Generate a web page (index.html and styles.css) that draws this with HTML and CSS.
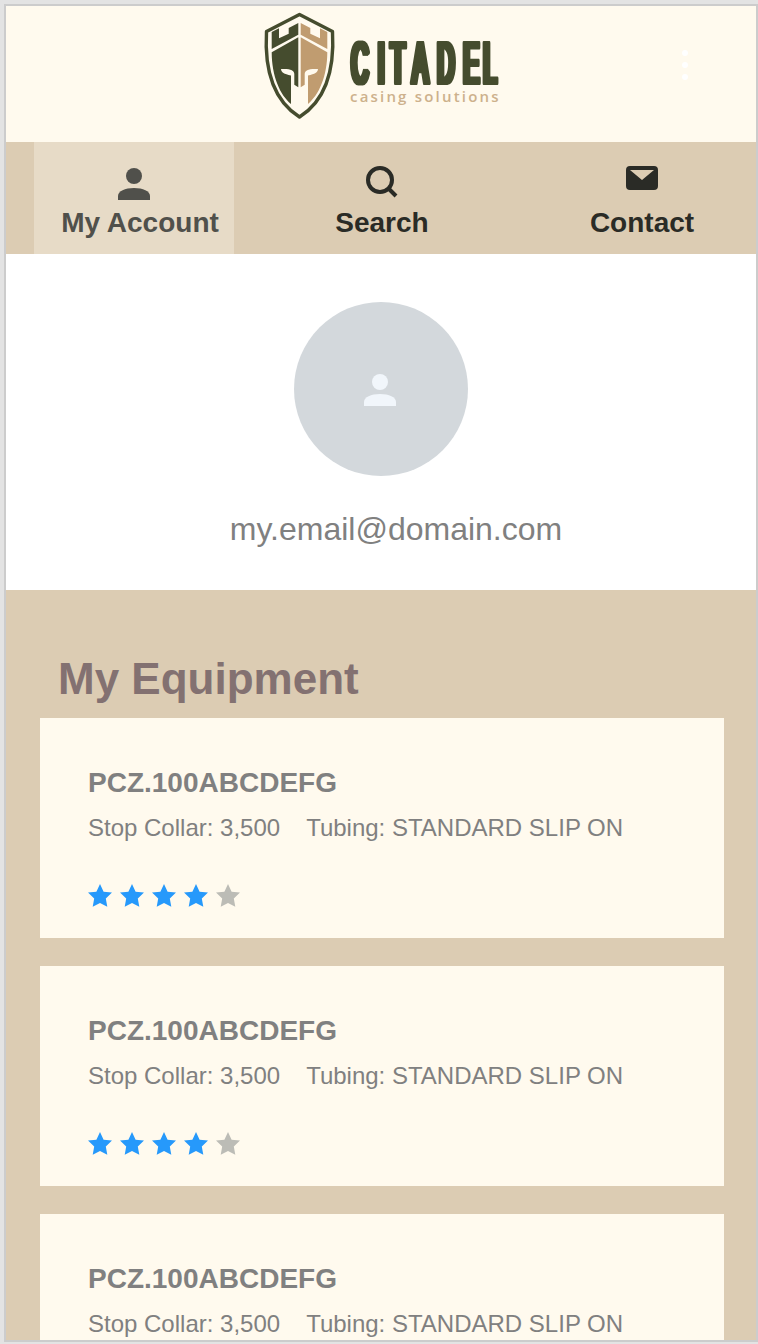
FILE: index.html
```html
<!DOCTYPE html>
<html lang="en">
<head>
<meta charset="utf-8">
<title>Citadel – My Account</title>
<link rel="stylesheet" href="styles.css">
</head>
<body>
<svg class="defs" width="0" height="0">
  <symbol id="person" viewBox="0 0 32 32"><circle cx="16" cy="8" r="8"/><path d="M0 32v-4c0-5 7-8 16-8s16 3 16 8v4z"/></symbol>
  <symbol id="star" viewBox="0 0 24 24"><path d="M12 0l3.600 7.700 8.400.9-6.200 5.800 1.500 8.300L12 18.900l-7.300 3.800 1.500-8.300L0 8.600l8.400-.9z"/></symbol>
  <symbol id="half" viewBox="260 11 240 110">
    <path d="M271.700 32l7.300-3.700v10l9.700-4.500V28l9.600-5v11.700L271.700 49z"/>
    <path d="M271.700 52.300l26.600-15v50l-4-2.600V74c-.3-4-4-5.500-13.300-5 .3 3.500 3 5 10 6.500V104c-11-9-19.300-28-19.300-51.700z"/>
  </symbol>
</svg>
<div class="screen">
  <header class="header">
    <svg class="logo" width="240" height="110" viewBox="260 11 240 110" role="img" aria-label="Citadel casing solutions">
      <filter id="widen" x="-10%" y="-10%" width="120%" height="120%" color-interpolation-filters="sRGB"><feMorphology operator="dilate" radius="2 0"/></filter>
      <path d="M299.500 14.500L332.500 31.500C334.500 66 328 99 299.500 117C271 99 264.500 66 266.500 31.500Z" fill="none" stroke="#454c2e" stroke-width="3.400" stroke-linejoin="round"/>
      <use class="green" href="#half" x="260" y="11" width="240" height="110"/>
      <g transform="translate(599 0) scale(-1 1)"><use class="tan" href="#half" x="260" y="11" width="240" height="110"/></g>
      <g filter="url(#widen)"><text class="wordmark" transform="translate(351.600 83) scale(.4 1)" x="0 66 98 152 215 279.500 329.500" y="0">CITADEL</text></g>
      <text class="tagline" x="350" y="102" textLength="148.500">casing solutions</text>
    </svg>
    <svg class="more" width="6" height="30" viewBox="0 0 6 30"><circle cx="3" cy="3" r="3"/><circle cx="3" cy="15" r="3"/><circle cx="3" cy="27" r="3"/></svg>
  </header>
  <nav class="tabs">
    <a class="tab active"><svg class="tab-icon" width="32" height="34"><use href="#person" y="2" width="32" height="32"/></svg><span>My Account</span></a>
    <a class="tab search"><svg class="tab-icon" width="32" height="34" viewBox="0 0 32 34"><g fill="none" stroke="#2a2b26" stroke-width="4"><circle cx="14" cy="14" r="12"/><path d="M22.500 22.500l7.500 7.500"/></g></svg><span>Search</span></a>
    <a class="tab contact"><svg class="tab-icon" width="32" height="34" viewBox="0 0 32 34"><path fill-rule="evenodd" d="M4 0h24a4 4 0 0 1 4 4v16a4 4 0 0 1-4 4H4a4 4 0 0 1-4-4V4a4 4 0 0 1 4-4zM4 4l12 10L28 4z"/></svg><span>Contact</span></a>
  </nav>
  <section class="profile">
    <div class="avatar"><svg width="32" height="32"><use href="#person"/></svg></div>
    <div class="email">my.email@domain.com</div>
  </section>
  <main class="equipment">
    <h1 class="title">My Equipment</h1>
    <article class="card">
      <h2 class="name">PCZ.100ABCDEFG</h2>
      <p class="specs"><span>Stop Collar: 3,500</span><span>Tubing: STANDARD SLIP ON</span></p>
      <div class="stars"><svg><use href="#star"/></svg><svg><use href="#star"/></svg><svg><use href="#star"/></svg><svg><use href="#star"/></svg><svg class="empty"><use href="#star"/></svg></div>
    </article>
    <article class="card">
      <h2 class="name">PCZ.100ABCDEFG</h2>
      <p class="specs"><span>Stop Collar: 3,500</span><span>Tubing: STANDARD SLIP ON</span></p>
      <div class="stars"><svg><use href="#star"/></svg><svg><use href="#star"/></svg><svg><use href="#star"/></svg><svg><use href="#star"/></svg><svg class="empty"><use href="#star"/></svg></div>
    </article>
    <article class="card">
      <h2 class="name">PCZ.100ABCDEFG</h2>
      <p class="specs"><span>Stop Collar: 3,500</span><span>Tubing: STANDARD SLIP ON</span></p>
    </article>
  </main>
</div>
</body>
</html>
```
FILE: styles.css
```css
* { box-sizing: border-box; }
body {
  margin: 0;
  height: 1344px;
  padding: 4px 0 2px 4px;
  overflow: hidden;
  background: #e3e3e3;
  font-family: "Liberation Sans", Arial, sans-serif;
}
.defs { position: absolute; }
.screen {
  width: 754px;
  height: 1338px;
  border: 2px solid #ccc;
  overflow: hidden;
  background: #fff;
}
.header {
  display: flex;
  justify-content: space-between;
  align-items: flex-start;
  height: 136px;
  padding: 5px 68px 0 254px;
  background: #fffaee;
}
.logo { overflow: visible; }
.green { fill: #454c2e; }
.tan { fill: #c09c70; }
.wordmark {
  font-size: 58px;
  fill: #454c2e;
  stroke: #454c2e;
  stroke-width: 4px;
  stroke-linejoin: round;
}
.tagline {
  font-family: "Open Sans", sans-serif;
  font-size: 15px;
  font-weight: 600;
  fill: #cdb18c;
}
.more { margin-top: 39px; fill: #fff; }
.tabs {
  display: flex;
  height: 112px;
  padding-left: 28px;
  background: #dcccb3;
}
.tab {
  display: flex;
  flex-direction: column;
  align-items: center;
  padding-top: 24px;
  font-size: 28px;
  line-height: 32px;
  font-weight: bold;
  color: #2a2b26;
  fill: #2a2b26;
}
.tab-icon { margin-bottom: 7px; }
.active {
  width: 200px;
  padding-left: 12px;
  background: #e7dbc7;
  color: #50504b;
  fill: #50504b;
}
.active .tab-icon { margin-right: 12px; }
.search { width: 296px; }
.contact { width: 224px; }
.profile {
  display: flex;
  flex-direction: column;
  align-items: center;
  height: 336px;
  padding-top: 48px;
}
.avatar {
  display: flex;
  align-items: center;
  justify-content: center;
  width: 174px;
  height: 174px;
  padding: 2px 2px 0 0;
  border-radius: 50%;
  background: #d3d8dc;
  fill: #f1f6fb;
}
.email {
  margin: 35px 0 0 30px;
  font-size: 32px;
  line-height: 36px;
  color: #808080;
}
.equipment {
  height: 750px;
  padding: 64px 32px 0 34px;
  background: #dcccb3;
}
.title {
  margin: 0 0 14px;
  padding-left: 18px;
  font-size: 44px;
  line-height: 50px;
  color: #837171;
}
.card {
  height: 220px;
  margin-bottom: 28px;
  padding: 48px;
  background: #fffaee;
  color: #808080;
}
.name { margin: 0; font-size: 28px; line-height: 34px; }
.specs {
  display: flex;
  gap: 26px;
  margin: 14px 0 0;
  font-size: 24px;
  line-height: 28px;
}
.stars {
  display: flex;
  gap: 8px;
  margin-top: 42px;
  fill: #2699fb;
}
.stars svg { width: 24px; height: 24px; }
.stars .empty { fill: #bcbcb6; }
```
